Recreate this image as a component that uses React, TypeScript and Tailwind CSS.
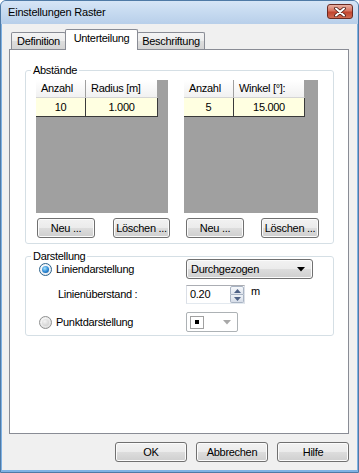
import React from "react"

const face =
  "flex h-[20px] items-center rounded-[3px] border border-[#707070] bg-[linear-gradient(#f2f2f2_0%,#ebebeb_50%,#dddddd_50%,#cfcfcf_100%)] shadow-[inset_0_0_0_1px_#fbfbfb]"
const btn = `${face} justify-center`

function Grid({ cols }: { cols: { head: string; value: string; w: string }[] }) {
  return (
    <div className="h-[133px] w-full bg-[#a0a0a0]">
      <div className="flex">
        {cols.map((c) => (
          <div
            key={c.head}
            className={`${c.w} flex h-[18px] items-center border-r border-b border-r-[#a0a0a0] border-b-[#d5d5d5] bg-[linear-gradient(#ffffff,#f1f1f1)] pl-[5px]`}
          >
            {c.head}
          </div>
        ))}
      </div>
      <div className="flex">
        {cols.map((c) => (
          <div
            key={c.head}
            className={`${c.w} flex h-[19px] items-center justify-center border-r border-b border-[#3a3a3a] bg-[#ffffe1]`}
          >
            {c.value}
          </div>
        ))}
      </div>
    </div>
  )
}

function Radio({ checked }: { checked?: boolean }) {
  if (checked) {
    return (
      <span className="flex h-[13px] w-[13px] items-center justify-center rounded-full border border-[#2c628b] bg-[radial-gradient(circle_at_40%_35%,#ffffff,#dfe6ee)]">
        <span className="h-[7px] w-[7px] rounded-full bg-[radial-gradient(circle_at_40%_35%,#a8e6ff,#2a86d4_55%,#0d4c8c)]" />
      </span>
    )
  }
  return (
    <span className="flex h-[13px] w-[13px] items-center justify-center rounded-full border border-[#8e8f8f] bg-[radial-gradient(circle_at_40%_35%,#ffffff,#d4d4d4)]">
      <span className="h-[7px] w-[7px] rounded-full bg-[radial-gradient(circle_at_40%_35%,#f4f4f4,#c8c8c8)]" />
    </span>
  )
}

export default function App() {
  return (
    <div className="flex h-[473px] w-[359px] flex-col overflow-hidden rounded-t-[6px] border border-[#4f7aa6] bg-[#7fb2e4] font-['Liberation_Sans',Arial,sans-serif] text-[11px] tracking-[-0.3px] text-black">
      {/* Title bar */}
      <div className="flex h-[23px] shrink-0 items-start justify-between bg-[linear-gradient(#d6e5f6_0%,#c6daf0_50%,#b8cfea_100%)] pl-[7px]">
        <span className="mt-[5px] leading-[13px] tracking-[-0.2px]">Einstellungen Raster</span>
        <div className="mt-[3px] mr-[5px] flex h-[15px] w-[26px] items-center justify-center rounded-[3px] border border-[#6b2a22] bg-[linear-gradient(#e8b1a4_0%,#d7735f_45%,#c1432d_55%,#cf6a52_100%)]">
          <svg width="12" height="10" viewBox="0 0 12 10">
            <path d="M2 1.5 L10 8.5 M10 1.5 L2 8.5" stroke="#4a1a14" strokeWidth="3.6" strokeLinecap="round" />
            <path d="M2 1.5 L10 8.5 M10 1.5 L2 8.5" stroke="#ffffff" strokeWidth="2" strokeLinecap="round" />
          </svg>
        </div>
      </div>

      {/* Body */}
      <div className="mx-[1px] mb-[2px] flex flex-1 flex-col bg-[#f0f0f0] pl-[7px] pt-[5px]">
        {/* Tabs */}
        <div className="flex h-[20px] items-end pl-[2px]">
          <div className="flex h-[17px] w-[55px] items-center justify-center rounded-t-[2px] border border-b-0 border-[#898c95] bg-[linear-gradient(#f4f4f4_0%,#ececec_50%,#dedede_50%,#d4d4d4_100%)]">
            Definition
          </div>
          <div className="relative z-10 -mb-px -ml-px flex h-[21px] w-[73px] items-center justify-center rounded-t-[2px] border border-b-0 border-[#898c95] bg-white pb-[3px]">
            Unterteilung
          </div>
          <div className="-ml-px flex h-[17px] w-[68px] items-center justify-center rounded-t-[2px] border border-b-0 border-[#898c95] bg-[linear-gradient(#f4f4f4_0%,#ececec_50%,#dedede_50%,#d4d4d4_100%)]">
            Beschriftung
          </div>
        </div>

        {/* Panel */}
        <div className="flex h-[385px] w-[340px] flex-col border border-[#898c95] bg-white">
          <fieldset className="mt-[14px] ml-[15px] mr-[14px] rounded-[3px] border border-[#d5dfe5] pb-[5px] pl-[10px]">
            <legend className="ml-[-5px] px-[2px] leading-[13px]">Abstände</legend>
            <div className="mt-[3px] flex">
              <div className="flex w-[134px] flex-col">
                <div className="w-[132px]">
                  <Grid
                    cols={[
                      { head: "Anzahl", value: "10", w: "w-[50px]" },
                      { head: "Radius [m]", value: "1.000", w: "w-[72px]" },
                    ]}
                  />
                </div>
                <div className="mt-[5px] flex justify-between pl-[1px]">
                  <div className={`${btn} w-[58px]`}>Neu ...</div>
                  <div className={`${btn} w-[57px]`}>Löschen ...</div>
                </div>
              </div>
              <div className="ml-[14px] flex w-[135px] flex-col">
                <div className="w-[134px]">
                  <Grid
                    cols={[
                      { head: "Anzahl", value: "5", w: "w-[50px]" },
                      { head: "Winkel [°]:", value: "15.000", w: "w-[71px]" },
                    ]}
                  />
                </div>
                <div className="mt-[5px] flex justify-between pl-[2px]">
                  <div className={`${btn} w-[58px]`}>Neu ...</div>
                  <div className={`${btn} w-[58px]`}>Löschen ...</div>
                </div>
              </div>
            </div>
          </fieldset>

          <fieldset className="mt-[6px] ml-[15px] mr-[14px] rounded-[3px] border border-[#d5dfe5] pb-[3px] pl-[13px]">
            <legend className="ml-[-8px] px-[2px] leading-[13px]">Darstellung</legend>
            <div className="-mt-[4px] flex h-[20px] items-center">
              <div className="flex w-[147px] items-center gap-[4px]">
                <Radio checked />
                <span>Liniendarstellung</span>
              </div>
              <div className={`${face} w-[127px] justify-between pl-[4px] pr-[7px]`}>
                <span>Durchgezogen</span>
                <svg width="8" height="5" viewBox="0 0 8 5">
                  <path d="M0 0 H8 L4 4.5 Z" fill="#000" />
                </svg>
              </div>
            </div>
            <div className="mt-[6px] flex h-[19px]">
              <div className="flex w-[147px] items-center pl-[19px]">Linienüberstand :</div>
              <div className="flex w-[59px] items-stretch border border-[#dbdfe6] border-t-[#abadb3] border-b-[#e3e9ef] bg-white">
                <span className="flex flex-1 items-center pl-[3px]">0.20</span>
                <div className="flex w-[14px] flex-col">
                  <div className="flex flex-1 items-center justify-center rounded-t-[2px] border border-[#a9b4c4] bg-[linear-gradient(#f6f8fb,#dfe5ee)]">
                    <svg width="7" height="4" viewBox="0 0 7 4">
                      <path d="M0 4 L3.5 0 L7 4 Z" fill="#4d6185" />
                    </svg>
                  </div>
                  <div className="flex flex-1 items-center justify-center rounded-b-[2px] border border-t-0 border-[#a9b4c4] bg-[linear-gradient(#eef2f7,#d6dde8)]">
                    <svg width="7" height="4" viewBox="0 0 7 4">
                      <path d="M0 0 L7 0 L3.5 4 Z" fill="#4d6185" />
                    </svg>
                  </div>
                </div>
              </div>
              <span className="ml-[6px] mt-[1px] leading-[11px]">m</span>
            </div>
            <div className="mt-[8px] flex h-[20px] items-center">
              <div className="flex w-[147px] items-center gap-[4px]">
                <Radio />
                <span>Punktdarstellung</span>
              </div>
              <div className="flex h-[20px] w-[52px] items-center justify-between rounded-[2px] border border-[#adb2b5] bg-white pl-[3px] pr-[6px]">
                <div className="flex h-[13px] w-[14px] items-center justify-center border border-[#a0a0a0]">
                  <span className="h-[4px] w-[4px] bg-black" />
                </div>
                <svg width="8" height="5" viewBox="0 0 8 5">
                  <path d="M0 0 H8 L4 4.5 Z" fill="#a8a8a8" />
                </svg>
              </div>
            </div>
          </fieldset>
        </div>

        {/* Dialog buttons */}
        <div className="mt-[8px] flex w-[340px] justify-end gap-[9px]">
          <div className={`${btn} w-[72px] border-[#3c7fb1] shadow-[inset_0_0_0_1px_#c6ecfc]`}>OK</div>
          <div className={`${btn} w-[72px]`}>Abbrechen</div>
          <div className={`${btn} w-[72px]`}>Hilfe</div>
        </div>
      </div>
    </div>
  )
}
